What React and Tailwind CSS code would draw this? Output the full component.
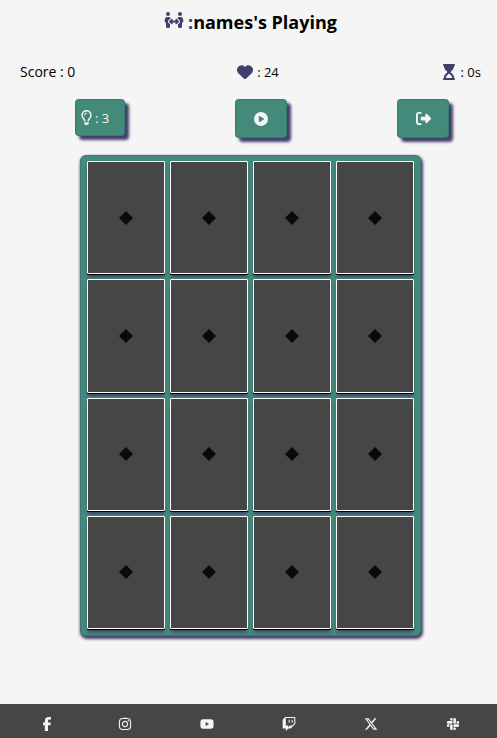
import {
  FaPeopleArrows, FaHeart, FaHourglassStart, FaRegLightbulb, FaCirclePlay,
  FaRightFromBracket, FaFacebookF, FaInstagram, FaYoutube, FaTwitch,
  FaXTwitter, FaSlack,
} from "react-icons/fa6";

const socials = [
  { name: "Facebook", Icon: FaFacebookF, width: "w-[9px]" },
  { name: "Instagram", Icon: FaInstagram, width: "w-3" },
  { name: "YouTube", Icon: FaYoutube, width: "w-4" },
  { name: "Twitch", Icon: FaTwitch, width: "w-3" },
  { name: "X", Icon: FaXTwitter, width: "w-4" },
  { name: "Slack", Icon: FaSlack, width: "w-3" },
];

const cards = Array.from({ length: 16 }, (_, i) => i + 1);

const buttonClass =
  "flex items-center justify-center rounded-[4px] border border-dotted border-[#3f6078] bg-[#438a7a] text-[#f5f5f5] shadow-[4px_4px_3px_0_#413f6b]";

function Card({ number }) {
  return (
    <button
      type="button"
      aria-label={`Card ${number}`}
      className="flex items-center justify-center rounded-[1px] border border-white bg-[#464646] text-[#0a0a0a] shadow-[0_1px_0_0_#000000,0_4px_3px_-1px_#413f6b]"
    >
      <svg viewBox="0 0 14 14" className="size-[14px]" fill="currentColor" aria-hidden="true">
        <path d="M7 0 14 7 7 14 0 7Z" />
      </svg>
    </button>
  );
}

export default function App() {
  return (
    <div className="flex min-h-screen flex-col bg-[#f5f5f5] font-['Open_Sans',sans-serif] text-[13px] leading-5 text-black">
      <main className="flex flex-1 flex-col pr-4 pb-12 pl-5">
        <h1 className="flex items-center justify-center gap-1 pt-2 text-lg leading-7 font-bold">
          <FaPeopleArrows className="mb-1 size-5 text-[#413f6b]" />
          <span><span className="text-[#413f6b]">:</span>names's Playing</span>
        </h1>

        <div className="mt-[26px] flex items-center justify-between">
          <p className="text-sm">Score : 0</p>
          <p className="flex items-center gap-1">
            <FaHeart className="size-4 text-[#413f6b]" />
            <span>: 24</span>
          </p>
          <p className="flex items-center gap-1">
            <FaHourglassStart className="size-4 text-[#413f6b]" />
            <span>: 0s</span>
          </p>
        </div>

        <div className="mt-[17px] flex items-start justify-between pr-8 pl-[55px]">
          <button type="button" aria-label="Hint, 3 left" className={`${buttonClass} h-[37px] w-[50px] pr-3`}>
            <FaRegLightbulb className="size-[15px]" />
            <span className="pl-px">: 3</span>
          </button>
          <button type="button" aria-label="Play" className={`${buttonClass} h-[39px] w-[52px]`}>
            <FaCirclePlay className="size-[14px]" />
          </button>
          <button type="button" aria-label="Leave game" className={`${buttonClass} h-[39px] w-[52px]`}>
            <FaRightFromBracket className="size-[15px]" />
          </button>
        </div>

        <section
          aria-label="Cards"
          className="mx-auto mt-[17px] grid min-h-[481px] w-full max-w-[341px] auto-rows-fr grid-cols-4 gap-[5px] rounded-md border border-dotted border-[#3f6078] bg-[#438a7a] px-[6px] pt-[5px] pb-[6px] shadow-[1px_2px_3px_1px_#413f6b]"
        >
          {cards.map((n) => <Card key={n} number={n} />)}
        </section>
      </main>

      <footer className="bg-[#464646]">
        <nav aria-label="Social media" className="flex h-[34px] items-center justify-between pt-[6px] pr-[38px] pl-[42px]">
          {socials.map(({ name, Icon, width }) => (
            <a key={name} href="#" aria-label={name} className={`flex justify-center text-[#f5f5f5] ${width}`}>
              <Icon className="size-[14px] shrink-0" />
            </a>
          ))}
        </nav>
      </footer>
    </div>
  );
}
